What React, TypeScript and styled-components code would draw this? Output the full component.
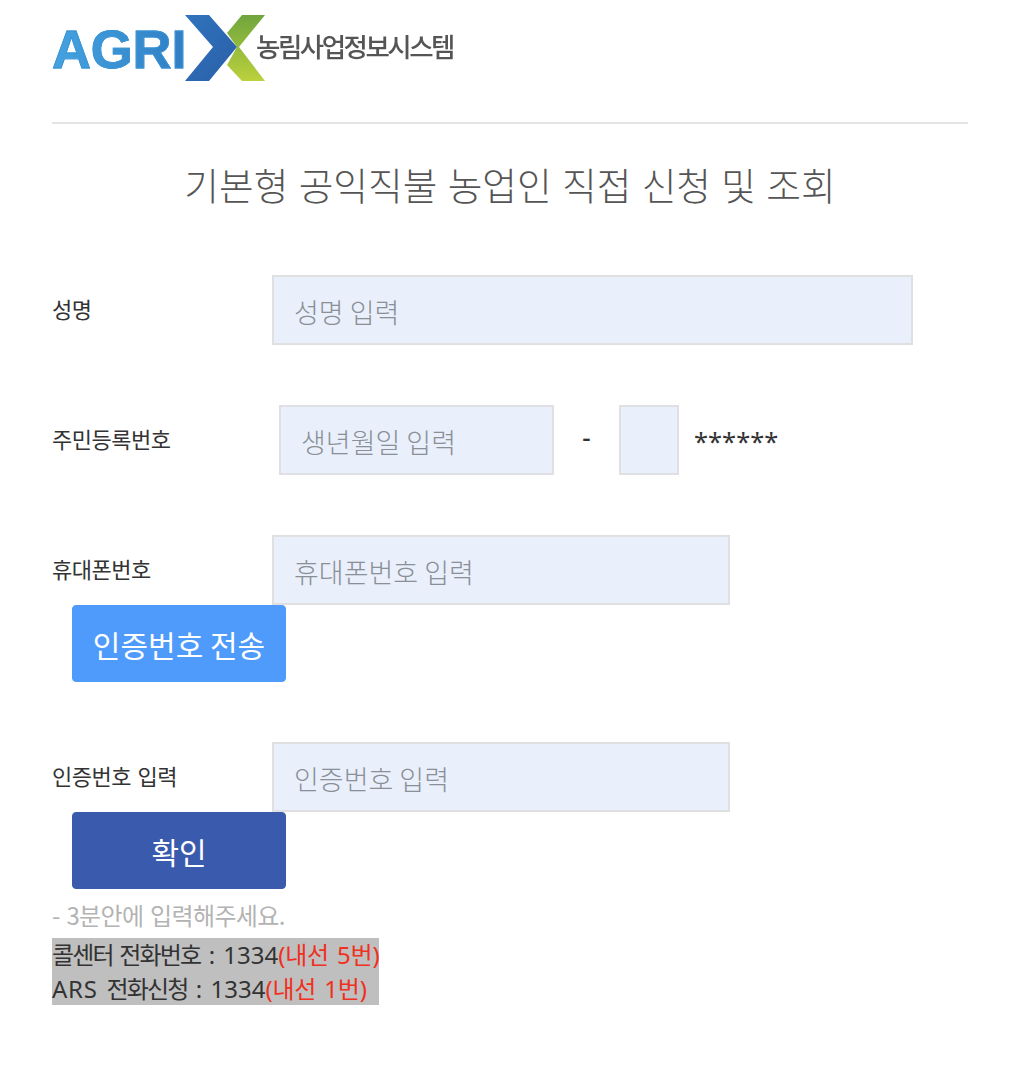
import React from "react";
import styled, { createGlobalStyle } from "styled-components";

const FONT = `"Noto Sans CJK KR", "Noto Sans", sans-serif`;
const LATIN_FIRST = `"Noto Sans", "Noto Sans CJK KR", sans-serif`;

const Global = createGlobalStyle`
  html, body { margin: 0; padding: 0; background: #fff; }
  body { font-family: ${FONT}; color: #333; }
  * { box-sizing: border-box; }
`;

const Page = styled.div`
  width: 1022px;
  height: 1086px;
  padding: 0 54px 0 52px;
  overflow: hidden;
`;

const Header = styled.header`
  height: 124px;
  border-bottom: 2px solid #e4e4e4;
  padding-top: 14px;
`;

const Logo = styled.div`
  display: flex;
  align-items: flex-start;
  height: 68px;
  filter: blur(0.4px);
`;

const LogoWord = styled.span`
  flex: none;
  width: 133px;
  margin-top: 3px;
  font-family: "Liberation Sans", sans-serif;
  font-weight: 700;
  font-size: 54px;
  line-height: 1.2;
  letter-spacing: -0.2px;
  background: linear-gradient(90deg, #45a3e0, #2f7fc4);
  -webkit-background-clip: text;
  background-clip: text;
  color: transparent;
  -webkit-text-stroke: 0.8px #3a93d6;
`;

const LogoMark = styled.svg`
  flex: none;
  width: 80px;
  height: 68px;
`;

const LogoName = styled.span`
  margin: 16px 0 0 -9px;
  font-size: 26.5px;
  font-weight: 500;
  line-height: 1.2;
  letter-spacing: -2.5px;
  color: #555;
  white-space: nowrap;
`;

const Title = styled.h1`
  margin: 30px 0 0;
  height: 60px;
  text-align: center;
  font-size: 37.7px;
  line-height: 60px;
  font-weight: 200;
  color: #555;
  word-spacing: 2px;
`;

const Row = styled.div<{ $top: number }>`
  display: flex;
  align-items: center;
  height: 70px;
  margin-top: ${(p) => p.$top}px;
`;

const Label = styled.label<{ $w?: number }>`
  flex: none;
  width: ${(p) => p.$w ?? 220}px;
  position: relative;
  top: -2px;
  font-size: 22px;
  letter-spacing: -0.5px;
  word-spacing: 2px;
  color: #333;
`;

const Input = styled.input<{ $w: number }>`
  flex: none;
  width: ${(p) => p.$w}px;
  height: 70px;
  padding: 2px 20px 0;
  background: #e9f0fc;
  border: 2px solid #e0e0e3;
  border-radius: 0;
  outline: none;
  font-family: ${FONT};
  font-size: 27px;
  font-weight: 300;
  color: #333;
  &::placeholder { color: #8b8f96; opacity: 1; }
`;

const Dash = styled.span`
  flex: none;
  width: 65px;
  position: relative;
  top: -3px;
  text-align: center;
  font-family: ${LATIN_FIRST};
  font-size: 26px;
  font-weight: 500;
  color: #333;
`;

const Mask = styled.span`
  position: relative;
  top: 1px;
  margin-left: 15px;
  font-family: ${LATIN_FIRST};
  font-size: 25.5px;
  color: #333;
`;

const Button = styled.button<{ $bg: string }>`
  display: block;
  width: 214px;
  height: 77px;
  margin-left: 20px;
  padding: 0;
  border: 1px solid ${(p) => p.$bg};
  border-radius: 4px;
  background: ${(p) => p.$bg};
  color: #fff;
  font-family: ${FONT};
  font-size: 30px;
  font-weight: 400;
`;

const Hint = styled.p`
  margin: 11px 0 0;
  height: 38px;
  font-size: 24px;
  line-height: 30px;
  letter-spacing: -0.65px;
  word-spacing: 2px;
  color: #b3b3b3;
`;

const Notice = styled.div`
  display: inline-block;
  background: #bfbfbf;
  font-family: ${LATIN_FIRST};
  font-size: 24px;
  line-height: 33.5px;
  letter-spacing: -1.8px;
  word-spacing: 2px;
  color: #333;
  white-space: pre;
`;

const Plain = styled.span`
  letter-spacing: 0;
  word-spacing: 2px;
`;

const Latin = styled(Plain)`
  letter-spacing: 0.7px;
`;

const Ext = styled.span`
  color: #f03020;
  letter-spacing: -0.2px;
`;

export default function App() {
  return (
    <Page>
      <Global />
      <Header>
        <Logo>
          <LogoWord>AGRI</LogoWord>
          <LogoMark viewBox="0 0 80 68">
            <defs>
              <linearGradient id="blue" x1="0" y1="0" x2="1" y2="1">
                <stop offset="0" stopColor="#2f74bd" />
                <stop offset="1" stopColor="#2a5fa8" />
              </linearGradient>
              <linearGradient id="green" x1="0" y1="0" x2="0" y2="1">
                <stop offset="0" stopColor="#6fa53d" />
                <stop offset="1" stopColor="#bcd13d" />
              </linearGradient>
            </defs>
            <path d="M80 1 L57 1 L42 19 L52 33 L42 51 L57 67 L80 67 L54 33 Z" fill="url(#green)" />
            <path d="M0 1 L24 1 L52 33 L24 67 L0 67 L28 33 Z" fill="url(#blue)" />
          </LogoMark>
          <LogoName>농림사업정보시스템</LogoName>
        </Logo>
      </Header>
      <Title>기본형 공익직불 농업인 직접 신청 및 조회</Title>
      <Row $top={61}>
        <Label>성명</Label>
        <Input $w={641} placeholder="성명 입력" />
      </Row>
      <Row $top={60}>
        <Label $w={227}>주민등록번호</Label>
        <Input $w={275} placeholder="생년월일 입력" />
        <Dash>-</Dash>
        <Input $w={60} />
        <Mask>******</Mask>
      </Row>
      <Row $top={60}>
        <Label>휴대폰번호</Label>
        <Input $w={458} placeholder="휴대폰번호 입력" />
      </Row>
      <Button $bg="#4f9bfb">인증번호 전송</Button>
      <Row $top={60}>
        <Label>인증번호 입력</Label>
        <Input $w={458} placeholder="인증번호 입력" />
      </Row>
      <Button $bg="#3a5bad">확인</Button>
      <Hint>- 3분안에 입력해주세요.</Hint>
      <Notice>
        콜센터 전화번호<Plain> : 1334</Plain><Ext>(내선 5번)</Ext>
        {"\n"}
        <Latin>ARS </Latin>전화신청<Plain> : 1334</Plain><Ext>(내선 1번)</Ext>
      </Notice>
    </Page>
  );
}
